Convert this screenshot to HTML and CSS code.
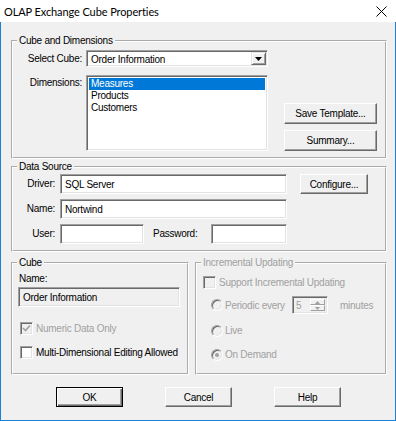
FILE: index.html
```html
<!DOCTYPE html>
<html lang="en">
<head>
    <meta charset="UTF-8">
    <title>OLAP Exchange Cube Properties</title>
    <link rel="stylesheet" href="styles.css">
</head>
<body>
    <div class="window">
        <div class="titlebar">
            <span class="title">OLAP Exchange Cube Properties</span>
            <svg class="close" width="11" height="11" viewBox="0 0 11 11">
                <path d="M0.5 0.5 L10.5 10.5 M10.5 0.5 L0.5 10.5" stroke="#000" stroke-width="1"/>
            </svg>
        </div>

        <div class="client">
            <!-- Cube and Dimensions -->
            <fieldset class="group">
                <legend>Cube and Dimensions</legend>
                <div class="row select-row">
                    <span class="lbl lbl-dim">Select Cube:</span>
                    <div class="field combo">
                        <span class="combo-text">Order Information</span>
                        <span class="combo-btn">
                            <svg width="7" height="4" viewBox="0 0 7 4"><path d="M0 0 H7 L3.5 4 Z" fill="#000"/></svg>
                        </span>
                    </div>
                </div>
                <div class="row dims-row">
                    <span class="lbl lbl-dim lbl-top">Dimensions:</span>
                    <div class="field listbox">
                        <div class="item sel">Measures</div>
                        <div class="item">Products</div>
                        <div class="item">Customers</div>
                    </div>
                    <div class="btn-col">
                        <button class="btn btn-wide">Save Template...</button>
                        <button class="btn btn-wide">Summary...</button>
                    </div>
                </div>
            </fieldset>

            <!-- Data Source -->
            <fieldset class="group source">
                <legend>Data Source</legend>
                <div class="row src-row first">
                    <span class="lbl lbl-src">Driver:</span>
                    <div class="field edit edit-long">SQL Server</div>
                    <button class="btn btn-configure">Configure...</button>
                </div>
                <div class="row src-row">
                    <span class="lbl lbl-src">Name:</span>
                    <div class="field edit edit-long">Nortwind</div>
                </div>
                <div class="row src-row">
                    <span class="lbl lbl-src">User:</span>
                    <div class="field edit edit-user"></div>
                    <span class="lbl-pass">Password:</span>
                    <div class="field edit edit-pass"></div>
                </div>
            </fieldset>

            <div class="row pair">
                <!-- Cube -->
                <fieldset class="group cube">
                    <legend>Cube</legend>
                    <div class="cube-name-lbl">Name:</div>
                    <div class="field edit cube-name">Order Information</div>
                    <div class="check-row numeric disabled">
                        <span class="field checkbox off">
                            <svg width="9" height="9" viewBox="0 0 9 9"><path d="M1 4 L3.5 6.5 L8 1.5" stroke="#a0a0a0" stroke-width="1.6" fill="none"/></svg>
                        </span>
                        <span>Numeric Data Only</span>
                    </div>
                    <div class="check-row multi">
                        <span class="field checkbox"></span>
                        <span>Multi-Dimensional Editing Allowed</span>
                    </div>
                </fieldset>

                <!-- Incremental Updating -->
                <fieldset class="group incr disabled">
                    <legend>Incremental Updating</legend>
                    <div class="check-row support">
                        <span class="field checkbox off"></span>
                        <span>Support Incremental Updating</span>
                    </div>
                    <div class="radio-row periodic">
                        <span class="radio"></span>
                        <span class="radio-text period-text">Periodic every</span>
                        <div class="field spin">
                            <span class="spin-val">5</span>
                            <span class="spin-btns">
                                <span class="spin-btn"><svg width="5" height="3" viewBox="0 0 5 3"><path d="M2.5 0 L5 3 H0 Z" fill="#a0a0a0"/></svg></span>
                                <span class="spin-btn"><svg width="5" height="3" viewBox="0 0 5 3"><path d="M0 0 H5 L2.5 3 Z" fill="#a0a0a0"/></svg></span>
                            </span>
                        </div>
                        <span class="minutes">minutes</span>
                    </div>
                    <div class="radio-row live">
                        <span class="radio"></span>
                        <span class="radio-text">Live</span>
                    </div>
                    <div class="radio-row demand">
                        <span class="radio checked"></span>
                        <span class="radio-text">On Demand</span>
                    </div>
                </fieldset>
            </div>

            <div class="row actions">
                <button class="btn btn-action default">OK</button>
                <button class="btn btn-action">Cancel</button>
                <button class="btn btn-action">Help</button>
            </div>
        </div>
    </div>
</body>
</html>
```

FILE: styles.css
```css
* {
    box-sizing: border-box;
}
body {
    margin: 0;
    font-family: "Liberation Sans", Arial, sans-serif;
    font-size: 10px;
    letter-spacing: -0.25px;
    line-height: 13px;
    color: #000;
}
.window {
    width: 396px;
    height: 421px;
    border: 1px solid #1a82d6;
    border-top: none;
    background: #f0f0f0;
}
.titlebar {
    height: 22px;
    margin: 0 -1px;
    background: #fff;
    display: flex;
    align-items: center;
    justify-content: space-between;
    padding: 0 9px 0 4px;
}
.title {
    font-family: Lato, "Liberation Sans", sans-serif;
    font-size: 11px;
    letter-spacing: -0.1px;
}
.close {
    margin-top: 1px;
}
.client {
    padding: 12px 8px 0 10px;
}
.row {
    display: flex;
}

/* group boxes (etched) */
.group {
    margin: 0;
    padding: 0 0 6px 0;
    min-inline-size: 0;
    border: 2px groove #fff;
}
.group legend {
    margin-left: 4px;
    padding: 0 2px 1px;
    line-height: 13px;
}
.disabled,
.disabled legend {
    color: #a0a0a0;
}

/* 3d borders */
.field {
    background: #fff;
    border: 1px solid;
    border-color: #a0a0a0 #fff #fff #a0a0a0;
    box-shadow: inset 1px 1px #696969, inset -1px -1px #e3e3e3;
}
.btn {
    font: inherit;
    letter-spacing: inherit;
    color: #000;
    background: #f0f0f0;
    border: 1px solid;
    border-color: #fff #696969 #696969 #fff;
    box-shadow: inset -1px -1px #a0a0a0;
    padding: 0;
    height: 21px;
}
.btn.default {
    border-color: #000;
    box-shadow: inset 1px 1px #fff, inset -1px -1px #696969, inset -2px -2px #a0a0a0;
}

/* labels */
.lbl {
    text-align: right;
    padding-right: 1px;
}
.lbl-dim {
    width: 70px;
    margin-right: 3px;
}
.lbl-top {
    margin-top: 1px;
}
.lbl-src {
    width: 44px;
    padding-right: 2px;
    margin-right: 3px;
    line-height: 20px;
}

/* cube and dimensions */
.select-row {
    margin-top: 2px;
    line-height: 17px;
}
.combo {
    width: 182px;
    height: 17px;
    display: flex;
    justify-content: space-between;
    padding: 1px 2px 2px 4px;
}
.combo-text {
    line-height: 13px;
    margin-top: 1px;
}
.combo-btn {
    width: 15px;
    height: 13px;
    margin-right: -1px;
    background: #f0f0f0;
    border: 1px solid;
    border-color: #e3e3e3 #696969 #696969 #e3e3e3;
    box-shadow: inset 1px 1px #fff, inset -1px -1px #a0a0a0;
    display: flex;
    align-items: center;
    justify-content: center;
}
.dims-row {
    margin-top: 8px;
}
.listbox {
    width: 182px;
    height: 76px;
    padding: 2px;
}
.item {
    height: 12px;
    line-height: 12px;
    padding-left: 2px;
}
.item.sel {
    background: #0078d7;
    color: #fff;
}
.btn-col {
    margin-left: 16px;
    display: flex;
    flex-direction: column;
    justify-content: flex-end;
    gap: 6px;
}
.btn-wide {
    width: 93px;
}

/* data source */
.source {
    margin-top: 1px;
}
.src-row {
    margin-top: 5px;
    height: 20px;
}
.src-row.first {
    margin-top: 0;
}
.edit {
    height: 20px;
    padding: 3px 4px;
}
.edit-long {
    width: 227px;
}
.edit-user {
    width: 84px;
}
.lbl-pass {
    width: 58px;
    margin-left: 9px;
    line-height: 20px;
}
.edit-pass {
    width: 76px;
}
.btn-configure {
    width: 68px;
    height: 20px;
    margin-left: 13px;
}

/* cube + incremental */
.pair {
    margin-top: 4px;
    gap: 6px;
}
.pair .group {
    height: 119px;
}
.cube {
    width: 178px;
}
.incr {
    width: 192px;
}
.cube-name-lbl {
    margin: 2px 0 0 6px;
}
.cube-name {
    width: 162px;
    margin: 2px 0 0 5px;
    background: #f0f0f0;
}
.check-row {
    display: flex;
    align-items: center;
    gap: 3px;
    height: 13px;
    white-space: nowrap;
}
.checkbox {
    width: 13px;
    height: 13px;
    display: flex;
    align-items: center;
    justify-content: center;
}
.checkbox.off {
    background: #f0f0f0;
}
.numeric {
    margin: 15px 0 0 7px;
}
.multi {
    margin: 11px 0 0 7px;
}
.support {
    margin: 6px 0 0 6px;
}
.radio-row {
    display: flex;
    align-items: center;
    margin-left: 14px;
    height: 13px;
    white-space: nowrap;
}
.radio {
    width: 12px;
    height: 12px;
    border-radius: 50%;
    border: 1px solid;
    border-color: #a0a0a0 #fff #fff #a0a0a0;
    box-shadow: inset 1px 1px #696969, inset -1px -1px #e3e3e3;
    background: #f0f0f0;
    margin-right: 2px;
    display: flex;
    align-items: center;
    justify-content: center;
}
.radio.checked::after {
    content: "";
    width: 4px;
    height: 4px;
    border-radius: 50%;
    background: #a0a0a0;
}
.periodic {
    margin-top: 7px;
    height: 18px;
}
.period-text {
    width: 67px;
}
.spin {
    width: 36px;
    height: 18px;
    background: #f0f0f0;
    display: flex;
    justify-content: space-between;
    padding: 2px 2px 2px 3px;
}
.spin-val {
    line-height: 13px;
}
.spin-btns {
    display: flex;
    flex-direction: column;
    width: 15px;
}
.spin-btn {
    flex: 1;
    background: #f0f0f0;
    border: 1px solid;
    border-color: #fff #a0a0a0 #a0a0a0 #fff;
    display: flex;
    align-items: center;
    justify-content: center;
}
.minutes {
    margin-left: 12px;
}
.live {
    margin-top: 10px;
}
.demand {
    margin-top: 11px;
}

/* bottom buttons */
.actions {
    margin-top: 12px;
    justify-content: center;
    gap: 42px;
    padding-right: 1px;
}
.btn-action {
    width: 67px;
    height: 20px;
}
```
